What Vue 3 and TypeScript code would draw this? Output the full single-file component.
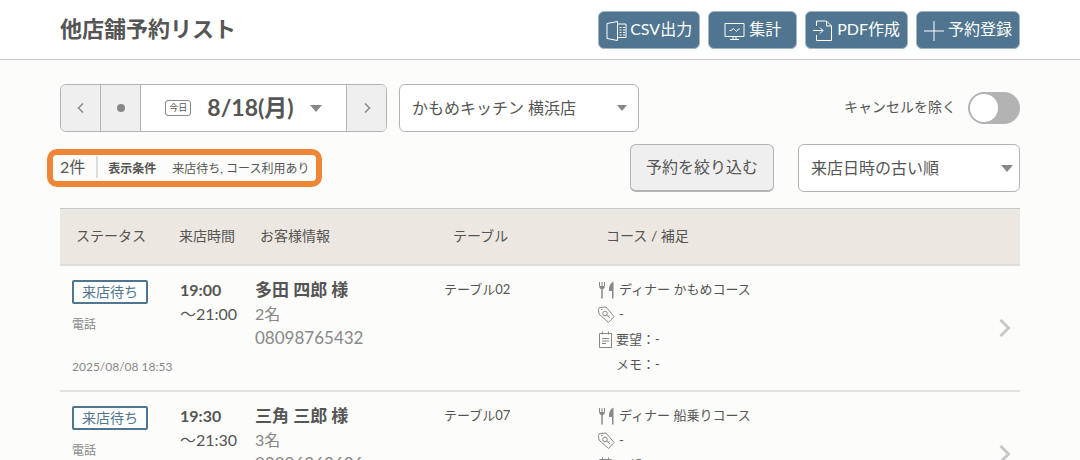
<script setup lang="ts">
import { ref } from 'vue'

interface Reservation {
  status: string
  route: string
  created: string
  from: string
  to: string
  name: string
  party: string
  phone: string
  table: string
  course: string
}

const actions = [
  { label: 'CSV出力', icon: 'csv' },
  { label: '集計', icon: 'monitor' },
  { label: 'PDF作成', icon: 'pdf' },
  { label: '予約登録', icon: 'plus' },
]

const excludeCancelled = ref(false)
const shop = ref('かもめキッチン 横浜店')
const order = ref('来店日時の古い順')

const reservations: Reservation[] = [
  {
    status: '来店待ち', route: '電話', created: '2025/08/08 18:53',
    from: '19:00', to: '21:00', name: '多田 四郎 様', party: '2名',
    phone: '08098765432', table: 'テーブル02', course: 'ディナー かもめコース',
  },
  {
    status: '来店待ち', route: '電話', created: '2025/08/08 18:55',
    from: '19:30', to: '21:30', name: '三角 三郎 様', party: '3名',
    phone: '08096262626', table: 'テーブル07', course: 'ディナー 船乗りコース',
  },
]
</script>

<template>
  <div class="page">
    <header class="top">
      <h1>他店舗予約リスト</h1>
      <div class="actions">
        <button v-for="a in actions" :key="a.label" type="button" class="action" :class="a.icon">
          <svg v-if="a.icon === 'csv'" width="21" height="20" viewBox="0 0 21 20" aria-hidden="true">
            <path d="M1 2.5 11.5.5v19L1 17.5z" />
            <path d="M11.5 3H20v13.500h-8.500M13.500 6.500h2M17 6.500h2M13.500 9h2M17 9h2M13.500 11.500h2M17 11.500h2M13.500 14h2M17 14h2" />
          </svg>
          <svg v-else-if="a.icon === 'monitor'" width="21" height="20" viewBox="0 0 21 20" aria-hidden="true">
            <path d="M1 2.500h19v13H1zM5.500 9.500H7l2.500-2 3 3 2-2.500h1.500M9 16v2.500M12 16v2.500M6 18.500h9" />
          </svg>
          <svg v-else-if="a.icon === 'pdf'" width="20" height="21" viewBox="0 0 20 21" aria-hidden="true">
            <path d="M3.500 6V1h10L18.500 6v14.500h-15V15M13.500 1v5h5M0 10.500h10M7 7.500l3 3-3 3" />
          </svg>
          <svg v-else width="20" height="20" viewBox="0 0 20 20" aria-hidden="true">
            <path d="M10 0v20M0 10h20" />
          </svg>
          <span>{{ a.label }}</span>
        </button>
      </div>
    </header>

    <main>
      <div class="row">
        <div class="datebar">
          <button type="button" class="step" aria-label="前日">
            <svg width="8" height="10" viewBox="0 0 8 10" aria-hidden="true"><path d="M6 .5 1.500 5 6 9.500" /></svg>
          </button>
          <button type="button" class="step" aria-label="当日"><i class="dot"></i></button>
          <button type="button" class="date">
            <span class="today">今日</span>
            <span class="day">8/18(月)</span>
            <i class="caret"></i>
          </button>
          <button type="button" class="step" aria-label="翌日">
            <svg width="8" height="10" viewBox="0 0 8 10" aria-hidden="true"><path d="M2 .5 6.500 5 2 9.500" /></svg>
          </button>
        </div>
        <div class="select shop">
          <select v-model="shop" aria-label="店舗">
            <option>かもめキッチン 横浜店</option>
          </select>
          <i class="caret small"></i>
        </div>
        <label class="toggle">
          <span>キャンセルを除く</span>
          <input v-model="excludeCancelled" type="checkbox" role="switch" />
        </label>
      </div>

      <div class="row second">
        <div class="summary">
          <span class="count">2件</span>
          <b>表示条件</b>
          <span>来店待ち, コース利用あり</span>
        </div>
        <button type="button" class="filter">予約を絞り込む</button>
        <div class="select order">
          <select v-model="order" aria-label="並び順">
            <option>来店日時の古い順</option>
          </select>
          <i class="caret"></i>
        </div>
      </div>

      <table>
        <colgroup>
          <col class="c-status" /><col class="c-time" /><col class="c-guest" />
          <col class="c-table" /><col /><col class="c-open" />
        </colgroup>
        <thead>
          <tr>
            <th>ステータス</th>
            <th>来店時間</th>
            <th>お客様情報</th>
            <th>テーブル</th>
            <th>コース / 補足</th>
            <th></th>
          </tr>
        </thead>
        <tbody>
          <tr v-for="r in reservations" :key="r.phone">
            <td class="status">
              <span class="badge">{{ r.status }}</span>
              <div class="route">{{ r.route }}</div>
              <div class="created">{{ r.created }}</div>
            </td>
            <td class="time"><b>{{ r.from }}</b><br />〜{{ r.to }}</td>
            <td class="guest">
              <b>{{ r.name }}</b>
              <div>{{ r.party }}</div>
              <div class="phone">{{ r.phone }}</div>
            </td>
            <td class="seat">{{ r.table }}</td>
            <td class="notes">
              <div class="note">
                <svg width="17" height="18" viewBox="0 0 17 18" aria-hidden="true">
                  <path class="line" d="M1.500 1v4.500q0 2 2.500 2t2.500-2V1M4 1v6" />
                  <path class="solid" d="M3.250 7h1.500v10.500h-1.500zM2 5h4v2.500H2zM15.500.5v17H14V10h-3Q10.500 3 15.500.5z" />
                </svg>
                <span>{{ r.course }}</span>
              </div>
              <div class="note">
                <svg width="17" height="18" viewBox="0 0 17 18" aria-hidden="true">
                  <path class="line" d="M.5 3.500 1.500 1.500 8 1 16 10.500 10.500 16.500 1 8zM3 3.500h1.500" />
                  <circle class="line" cx="7" cy="7.500" r="2.300" />
                  <path class="line" d="m8.500 9 3.500 3M10 10.500l1.500-1" />
                </svg>
                <span>-</span>
              </div>
              <div class="note">
                <svg width="14" height="18" viewBox="0 0 14 18" aria-hidden="true">
                  <path class="line" d="M1.500 2.500h12v14h-12zM4.500.5v3M10.500.5v3M4 7.500h7M4 10h7M4 12.500h4" />
                </svg>
                <span>要望：-</span>
              </div>
              <div class="note memo">メモ：-</div>
            </td>
            <td class="open">
              <button type="button" aria-label="詳細を開く">
                <svg width="12" height="18" viewBox="0 0 12 18" aria-hidden="true"><path d="m1.500 1 8 8-8 8" /></svg>
              </button>
            </td>
          </tr>
        </tbody>
      </table>
    </main>
  </div>
</template>

<style>
html {
  background: #fcfcfa;
  scrollbar-width: none;
}
</style>

<style scoped>
.page {
  min-height: 100vh;
  background: #fcfcfa;
  color: #555;
  font-family: Lato, "Noto Sans CJK JP", sans-serif;
  font-size: 16px;
}
.page * {
  box-sizing: border-box;
}
button,
select {
  font: inherit;
  color: inherit;
  margin: 0;
  padding: 0;
}
svg {
  display: block;
  flex: none;
  fill: none;
  stroke: currentColor;
}
.top {
  display: flex;
  align-items: center;
  justify-content: space-between;
  height: 60px;
  padding: 0 60px;
  background: #fff;
  border-bottom: 1px solid #c8c8c8;
}
h1 {
  margin: 0;
  padding-bottom: 2px;
  font-size: 22px;
  line-height: 32px;
}
.actions {
  display: flex;
  gap: 8px;
}
.action {
  display: flex;
  align-items: center;
  justify-content: center;
  gap: 4px;
  height: 38px;
  padding: 0 7px;
  border: 1px solid #a3b6c4;
  border-radius: 6px;
  background: #507590;
  color: #fff;
  line-height: 24px;
  white-space: nowrap;
}
.action span {
  padding-bottom: 2px;
}
.action svg {
  margin-top: 2px;
}
.action.csv {
  gap: 3px;
}
.action.monitor {
  padding: 0 15px;
}
main {
  padding: 24px 60px 0;
}
.row {
  display: flex;
  align-items: center;
}
.second {
  margin-top: 12px;
}
.datebar {
  display: flex;
  height: 48px;
  border: 1px solid #b3b3b3;
  border-radius: 6px;
  overflow: hidden;
}
.datebar button {
  display: flex;
  align-items: center;
  justify-content: center;
  border: 0;
  border-right: 1px solid #b3b3b3;
}
.datebar .step {
  width: 40px;
  background: #efefef;
  color: #888;
}
.datebar .step:last-child {
  width: 39px;
  border-right: 0;
}
.step svg {
  stroke-width: 1.5;
}
.dot {
  width: 8px;
  height: 8px;
  border-radius: 50%;
  background: #888;
}
.datebar .date {
  width: 206px;
  gap: 16px;
  background: #fff;
}
.today {
  padding: 0 3px;
  border: 1px solid #888;
  border-radius: 3px;
  font-size: 9px;
  line-height: 14px;
}
.day {
  padding-bottom: 2px;
  font-size: 23px;
  font-weight: 700;
  line-height: 32px;
}
.caret {
  border: 6px solid transparent;
  border-top: 7px solid #888;
  border-bottom: 0;
}
.caret.small {
  border-width: 6px 5px 0;
}
.select {
  position: relative;
  height: 48px;
}
.select select {
  width: 100%;
  height: 100%;
  padding: 0 32px 2px 12px;
  border: 1px solid #b3b3b3;
  border-radius: 6px;
  background: #fff;
  appearance: none;
}
.select .caret {
  position: absolute;
  right: 7px;
  top: 21px;
  pointer-events: none;
}
.select .caret.small {
  right: 12px;
}
.shop {
  width: 240px;
  margin-left: 12px;
}
.order {
  width: 222px;
  margin-left: 24px;
}
.toggle {
  display: flex;
  align-items: center;
  gap: 12px;
  margin-left: auto;
  font-size: 14px;
}
.toggle span {
  padding-bottom: 4px;
}
.toggle input {
  appearance: none;
  width: 52px;
  height: 32px;
  margin: 0;
  padding: 2px;
  border-radius: 16px;
  background: #b3b3b3;
}
.toggle input::before {
  content: "";
  display: block;
  width: 28px;
  height: 28px;
  border-radius: 50%;
  background: #fff;
}
.toggle input:checked {
  background: #507590;
}
.toggle input:checked::before {
  margin-left: auto;
}
.summary {
  display: flex;
  align-items: center;
  height: 38px;
  margin-left: -13px;
  padding: 0 6px 2px 7px;
  border: 6px solid #ee8537;
  border-radius: 10px;
  font-size: 12px;
  white-space: nowrap;
}
.count {
  padding-right: 11px;
  border-right: 2px solid #ddd;
  margin-right: 10px;
  font-size: 16px;
  line-height: 22px;
}
.summary b {
  margin-right: 16px;
}
.filter {
  height: 48px;
  margin-left: auto;
  padding: 0 15px 4px;
  border: 1px solid #b3b3b3;
  border-bottom-width: 2px;
  border-radius: 6px;
  background: #efefef;
}
table {
  width: 100%;
  margin-top: 16px;
  border-collapse: separate;
  border-spacing: 0;
  table-layout: fixed;
}
.c-status { width: 119px; }
.c-time { width: 76px; }
.c-guest { width: 189px; }
.c-table { width: 153px; }
.c-open { width: 40px; }
th {
  height: 58px;
  padding: 0 0 4px;
  border-top: 1px solid #c8c8c8;
  border-bottom: 2px solid #dcdcd8;
  background: #ece7e0;
  font-size: 14px;
  font-weight: 400;
  text-align: left;
}
th:first-child { padding-left: 16px; }
th:nth-child(3) { padding-left: 5px; }
th:nth-child(4) { padding-left: 9px; }
th:nth-child(5) { padding-left: 9px; }
td {
  height: 126px;
  padding: 12px 0 0;
  border-bottom: 2px solid #e2e2e0;
  vertical-align: top;
  white-space: nowrap;
}
.status {
  padding: 14px 0 0 12px;
  color: #888;
  font-size: 12px;
  line-height: 18px;
}
.badge {
  display: block;
  width: 76px;
  border: 2px solid #507590;
  border-radius: 2px;
  background: #fff;
  color: #507590;
  font-size: 14px;
  line-height: 20px;
  text-align: center;
}
.route {
  margin-top: 12px;
}
.created {
  margin-top: 24px;
}
.time {
  padding-left: 1px;
  line-height: 24px;
}
.guest {
  color: #888;
  line-height: 24px;
}
.guest b {
  color: #555;
  font-size: 17px;
}
.guest .phone {
  font-size: 17px;
}
.seat {
  font-size: 13px;
  line-height: 22px;
}
.notes {
  padding: 11px 0 0 1px;
  font-size: 13px;
  line-height: 25px;
}
.note {
  display: flex;
  align-items: center;
  gap: 4px;
  height: 25px;
}
.note svg {
  color: #888;
}
.note .solid {
  fill: #888;
  stroke: none;
}
.memo {
  padding-left: 18px;
}
.open {
  padding: 0;
  vertical-align: middle;
}
.open button {
  display: block;
  margin-left: 19px;
  border: 0;
  background: none;
  color: #c8c8c8;
}
.open svg {
  stroke-width: 3;
}
</style>
